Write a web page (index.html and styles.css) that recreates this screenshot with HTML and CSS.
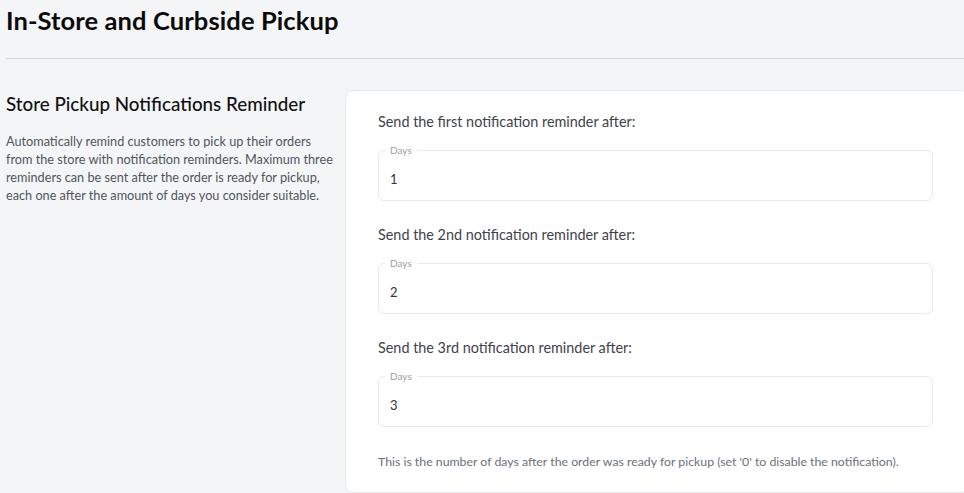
FILE: index.html
```html
<!DOCTYPE html>
<html>
<head>
<meta charset="utf-8">
<link rel="stylesheet" href="styles.css">
</head>
<body>
<header class="page-header">
  <h1 class="page-title">In-Store and Curbside Pickup</h1>
</header>
<main class="layout">
  <section class="intro">
    <h2 class="intro-title">Store Pickup Notifications Reminder</h2>
    <p class="intro-text">Automatically remind customers to pick up their orders from the store with notification reminders. Maximum three reminders can be sent after the order is ready for pickup, each one after the amount of days you consider suitable.</p>
  </section>
  <section class="card">
    <div class="group">
      <div class="group-label">Send the first notification reminder after:</div>
      <fieldset class="field">
        <legend class="field-legend">Days</legend>
        <div class="field-value">1</div>
      </fieldset>
    </div>
    <div class="group">
      <div class="group-label">Send the 2nd notification reminder after:</div>
      <fieldset class="field">
        <legend class="field-legend">Days</legend>
        <div class="field-value">2</div>
      </fieldset>
    </div>
    <div class="group">
      <div class="group-label">Send the 3rd notification reminder after:</div>
      <fieldset class="field">
        <legend class="field-legend">Days</legend>
        <div class="field-value">3</div>
      </fieldset>
    </div>
    <p class="help">This is the number of days after the order was ready for pickup (set '0' to disable the notification).</p>
  </section>
</main>
</body>
</html>
```
FILE: styles.css
```css
html, body {
  margin: 0;
  padding: 0;
  background: #f4f5f7;
  overflow: hidden;
  height: 493px;
}
body {
  font-family: Lato, "Open Sans", sans-serif;
  color: #1f2937;
}
.page-header {
  margin-left: 6px;
  border-bottom: 1px solid #d4d5d8;
  height: 59px;
  box-sizing: border-box;
}
.page-title {
  margin: 0;
  padding-top: 5px;
  font-size: 25.5px;
  line-height: 30px;
  font-weight: 700;
  letter-spacing: 0.1px;
  color: #0b0b0b;
}
.layout {
  display: flex;
  padding-top: 31px;
}
.intro {
  flex: none;
  width: 345px;
  padding-left: 6px;
  box-sizing: border-box;
  padding-right: 10px;
}
.intro-title {
  margin: 2px 0 0;
  font-size: 18.8px;
  line-height: 24px;
  font-weight: 500;
  color: #111;
}
.intro-text {
  margin: 16px 0 0;
  font-size: 12.7px;
  line-height: 18px;
  color: #50555c;
}
.card {
  flex: none;
  width: 624px;
  height: 403px;
  box-sizing: border-box;
  background: #fff;
  border: 1px solid #e6e7eb;
  border-radius: 8px;
  padding: 21px 32px 0;
  display: flex;
  flex-direction: column;
  gap: 24px;
}
.group {
  display: flex;
  flex-direction: column;
  gap: 12px;
  width: 555px;
}
.group-label {
  font-size: 14.4px;
  line-height: 20px;
  color: #3e434a;
}
.field {
  margin: 0;
  padding: 0 6px;
  border: 1px solid #e8e9ec;
  border-radius: 6px;
  min-width: 0;
}
.field-legend {
  padding: 0 5px;
  font-size: 10px;
  line-height: 12px;
  color: #9aa0a8;
}
.field-value {
  height: 44px;
  line-height: 47px;
  padding-left: 5px;
  font-size: 13px;
  color: #2d333a;
}
.help {
  margin: 3px 0 0;
  font-size: 12.3px;
  line-height: 16px;
  color: #6b7079;
  white-space: nowrap;
}
```
